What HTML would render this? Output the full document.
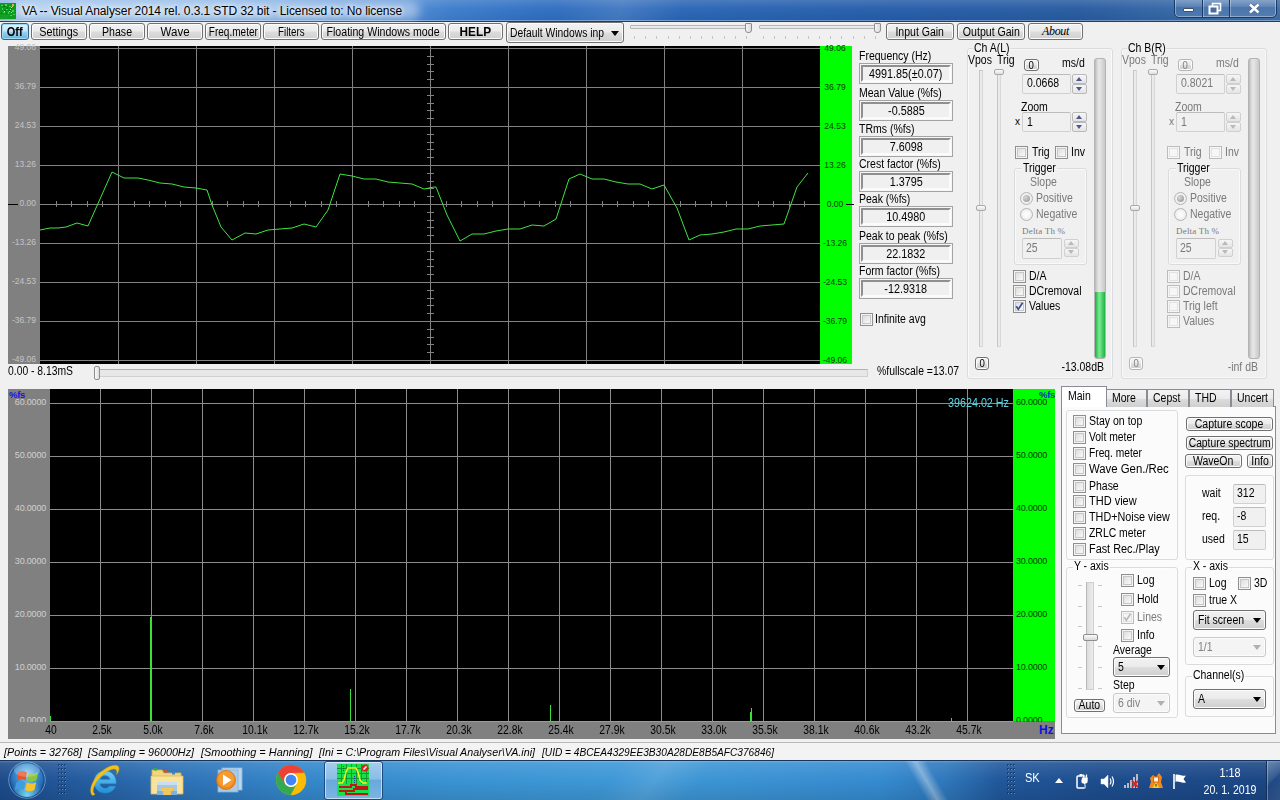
<!DOCTYPE html><html><head><meta charset="utf-8"><title>VA</title><style>
*{box-sizing:border-box;margin:0;padding:0}
html,body{width:1280px;height:800px;overflow:hidden;background:#f0f0f0;}
body{position:relative;font-family:"Liberation Sans",sans-serif;font-size:11px;color:#000;}
.a{position:absolute;}
.t{position:absolute;white-space:nowrap;line-height:13px;height:13px;font-size:12px;transform-origin:0 50%;transform:scaleX(.875);}
.n{transform:none !important;}
.s{display:inline-block;white-space:nowrap;transform:scaleX(.875);transform-origin:50% 50%;}
.sl{display:inline-block;white-space:nowrap;transform:scaleX(.875);transform-origin:0 50%;}
.g{color:#7a7a7a;}
.btn{position:absolute;border:1px solid #707070;border-radius:3px;background:linear-gradient(#f2f2f2 0%,#ebebeb 48%,#dddddd 52%,#cfcfcf 100%);box-shadow:inset 0 0 0 1px #fcfcfc;text-align:center;white-space:nowrap;font-size:12px;overflow:hidden;display:flex;justify-content:center;}
.cb{position:absolute;width:13px;height:13px;border:1px solid #8e8f8f;background:linear-gradient(135deg,#d6d6d6 0%,#f4f4f4 70%,#fbfbfb 100%);box-shadow:inset 0 0 0 1px #f4f4f4, inset 0 0 0 2px #c4c6c8;}
.cb.d{border-color:#bcbcbc;background:#f6f6f6;box-shadow:inset 0 0 0 1px #f6f6f6, inset 0 0 0 2px #e2e2e2;}
.gb{position:absolute;border:1px solid #d9dcde;border-radius:3px;box-shadow:inset 0 0 0 1px rgba(255,255,255,.6);}
.ed{position:absolute;border:1px solid #d0d0d0;border-top-color:#bcbcbc;background:#f0f0f0;border-radius:2px;}
.sunk{position:absolute;border:1px solid #a3a3a3;background:#f0f0f0;text-align:center;font-size:12px;box-shadow:inset 0 0 0 1px #f6f6f6;}
.sunk:before{content:"";position:absolute;left:1px;top:1px;right:1px;bottom:1px;border:2px solid;border-color:#8f8f8f #fbfbfb #fbfbfb #8f8f8f;}
.combo{position:absolute;border:1px solid #707070;border-radius:3px;background:linear-gradient(#f2f2f2 0%,#ebebeb 48%,#dddddd 52%,#cfcfcf 100%);box-shadow:inset 0 0 0 1px #fcfcfc;font-size:12px;white-space:nowrap;}
.combo.d{border-color:#c9c9c9;background:#f4f4f4;color:#838383;}
.combo i{position:absolute;right:4px;top:50%;margin-top:-2px;border:4px solid transparent;border-top:5px solid #000;border-bottom:0;}
.combo.d i{border-top-color:#b0b0b0;}
</style></head><body>
<div class="a" style="left:0;top:0;width:1280px;height:22px;background:linear-gradient(90deg,#8db8e8 0px,#7eaee4 200px,#5a93d8 380px,#3b7bcb 450px,#2d6dc0 540px,#2763b3 700px,#235ba8 900px,#25599f 1080px,#3668a6 1200px,#3d6ca6 1280px);"></div>
<div class="a" style="left:0;top:0;width:1280px;height:22px;background:linear-gradient(180deg,rgba(255,255,255,.16) 0,rgba(255,255,255,.04) 40%,rgba(0,0,0,.04) 100%);"></div>
<div class="a" style="left:560px;top:0;width:120px;height:21px;background:linear-gradient(105deg,rgba(255,255,255,0) 0,rgba(255,255,255,.10) 50%,rgba(255,255,255,0) 100%);"></div>
<div class="a" style="left:0px;top:20px;width:1280px;height:1px;background:rgba(255,255,255,.35);"></div>
<div class="a" style="left:0px;top:21px;width:1280px;height:1px;background:#1c3f6b;"></div>
<div class="a" style="left:10px;top:1px;width:410px;height:19px;border-radius:10px;background:rgba(255,255,255,.42);filter:blur(5px);"></div>
<svg class="a" style="left:0px;top:3px" width="16" height="16" viewBox="0 0 16 16" shape-rendering="crispEdges"><rect width="16" height="16" fill="#0f9a22"/>
<g fill="#3fd44a"><rect x="1" y="2" width="2" height="1"/><rect x="5" y="1" width="2" height="2"/><rect x="9" y="3" width="2" height="1"/><rect x="2" y="5" width="1" height="2"/><rect x="6" y="6" width="2" height="1"/><rect x="12" y="7" width="2" height="2"/><rect x="3" y="9" width="2" height="1"/><rect x="8" y="9" width="1" height="2"/><rect x="13" y="11" width="2" height="1"/><rect x="10" y="12" width="2" height="1"/></g>
<g fill="#087014"><rect x="3" y="3" width="2" height="1"/><rect x="7" y="4" width="1" height="2"/><rect x="11" y="5" width="1" height="1"/><rect x="4" y="7" width="2" height="1"/><rect x="9" y="7" width="2" height="1"/><rect x="1" y="10" width="1" height="1"/><rect x="6" y="10" width="1" height="1"/></g>
<g fill="#c8e850"><rect x="12" y="3" width="1" height="1"/><rect x="11" y="4" width="1" height="1"/><rect x="10" y="6" width="1" height="1"/><rect x="9" y="8" width="1" height="1"/><rect x="4" y="8" width="1" height="1"/><rect x="11" y="9" width="1" height="1"/></g>
<rect x="12" y="1" width="2" height="2" fill="#f0a050"/>
<g fill="#6a7a10"><rect x="0" y="12" width="9" height="1"/><rect x="0" y="14" width="11" height="1"/><rect x="1" y="13" width="1" height="1"/><rect x="3" y="13" width="1" height="1"/><rect x="5" y="13" width="1" height="1"/><rect x="7" y="13" width="1" height="1"/><rect x="1" y="15" width="1" height="1"/><rect x="3" y="15" width="1" height="1"/><rect x="5" y="15" width="1" height="1"/></g>
</svg>
<div class="t n" style="left:22px;top:4px;line-height:15px;height:15px;color:#000;text-shadow:0 0 4px #fff,0 0 6px #fff;font-size:12px;letter-spacing:-0.078px;">VA -- Visual Analyser 2014 rel. 0.3.1 STD 32 bit - Licensed to: No license</div>
<div class="a" style="left:1174px;top:-3px;width:103px;height:21px;border:1px solid #1b3b63;border-radius:0 0 5px 5px;background:linear-gradient(rgba(255,255,255,.30),rgba(255,255,255,.12) 45%,rgba(255,255,255,.04) 50%,rgba(255,255,255,.12));box-shadow:inset 0 0 0 1px rgba(255,255,255,.35);"></div>
<div class="a" style="left:1202px;top:0px;width:1px;height:17px;background:#1b3b63;"></div>
<div class="a" style="left:1203px;top:0px;width:1px;height:17px;background:rgba(255,255,255,.3);"></div>
<div class="a" style="left:1229px;top:0px;width:1px;height:17px;background:#1b3b63;"></div>
<div class="a" style="left:1230px;top:0px;width:1px;height:17px;background:rgba(255,255,255,.3);"></div>
<div class="a" style="left:1183px;top:8px;width:11px;height:4px;background:#fff;border:1px solid #42506a;border-radius:1px;"></div>
<svg class="a" style="left:1208px;top:2px" width="14" height="13" viewBox="0 0 14 13"><rect x="4.5" y="1.5" width="8" height="7" fill="none" stroke="#fff" stroke-width="1.6"/><rect x="1.5" y="4.5" width="8" height="7" fill="#4a6d9c" stroke="#fff" stroke-width="2"/></svg>
<svg class="a" style="left:1248px;top:3px" width="13" height="11" viewBox="0 0 13 11"><path d="M2 1.5 L10.5 9.5 M10.5 1.5 L2 9.5" stroke="#3a4f72" stroke-width="4" stroke-opacity=".6"/><path d="M2 1.5 L10.5 9.5 M10.5 1.5 L2 9.5" stroke="#fff" stroke-width="2.6"/></svg>
<div class="a" style="left:0px;top:22px;width:1280px;height:24px;background:#f0f0f0;"></div>
<div class="btn" style="left:1px;top:23px;width:28px;height:17px;line-height:15px;font-weight:bold;font-size:12px;border-color:#2c628b;background:linear-gradient(#e0f2fc 0%,#c4e5f6 48%,#98d1ef 52%,#68b3db 100%);box-shadow:inset 0 0 0 1px #9edaf5;padding-top:1px;"><span class="s" style="transform:scaleX(.92);">Off</span></div>
<div class="btn" style="left:31px;top:23px;width:56px;height:17px;line-height:17px;"><span class="s" style="font-size:12px;transform:scaleX(0.8995);">Settings</span></div>
<div class="btn" style="left:89px;top:23px;width:56px;height:17px;line-height:17px;"><span class="s" style="font-size:12px;transform:scaleX(0.8815);">Phase</span></div>
<div class="btn" style="left:147px;top:23px;width:56px;height:17px;line-height:17px;"><span class="s" style="font-size:12px;transform:scaleX(0.9592);">Wave</span></div>
<div class="btn" style="left:205px;top:23px;width:56px;height:17px;line-height:17px;"><span class="s" style="font-size:12px;transform:scaleX(0.8349);">Freq.meter</span></div>
<div class="btn" style="left:263px;top:23px;width:56px;height:17px;line-height:17px;"><span class="s" style="font-size:12px;transform:scaleX(0.8111);">Filters</span></div>
<div class="btn" style="left:321px;top:23px;width:125px;height:17px;line-height:17px;"><span class="s" style="font-size:12px;transform:scaleX(0.8824);">Floating Windows mode</span></div>
<div class="btn" style="left:886px;top:23px;width:68px;height:17px;line-height:17px;"><span class="s" style="font-size:12px;transform:scaleX(0.8758);">Input Gain</span></div>
<div class="btn" style="left:957px;top:23px;width:68px;height:17px;line-height:17px;"><span class="s" style="font-size:12px;transform:scaleX(0.8807);">Output Gain</span></div>
<div class="btn" style="left:448px;top:23px;width:55px;height:17px;line-height:16px;"><span class="s" style="font-size:13px;font-weight:bold;transform:scaleX(0.9085);">HELP</span></div>
<div class="btn" style="left:1028px;top:23px;width:55px;height:17px;line-height:15px;"><i style="font-family:'Liberation Serif',serif;font-size:12px;letter-spacing:-0.3px;">About</i></div>
<div class="combo" style="left:506px;top:22px;width:118px;height:21px;line-height:20px;padding-left:3px;"><span class="sl" style="font-size:12px;transform:scaleX(0.8593);">Default Windows inp</span><i></i></div>
<div class="a" style="left:630px;top:25px;width:120px;height:4px;border:1px solid #b6b6b6;background:#e7eaea;border-radius:1px;"></div>
<div class="a" style="left:745px;top:23px;width:7px;height:10px;border:1px solid #8e8e8e;background:linear-gradient(90deg,#f4f4f4,#dcdcdc);border-radius:1px 1px 3px 3px;"></div>
<div class="a" style="left:634px;top:36px;width:1px;height:3px;background:#c4c4c4;"></div>
<div class="a" style="left:645px;top:36px;width:1px;height:3px;background:#c4c4c4;"></div>
<div class="a" style="left:656px;top:36px;width:1px;height:3px;background:#c4c4c4;"></div>
<div class="a" style="left:668px;top:36px;width:1px;height:3px;background:#c4c4c4;"></div>
<div class="a" style="left:679px;top:36px;width:1px;height:3px;background:#c4c4c4;"></div>
<div class="a" style="left:690px;top:36px;width:1px;height:3px;background:#c4c4c4;"></div>
<div class="a" style="left:701px;top:36px;width:1px;height:3px;background:#c4c4c4;"></div>
<div class="a" style="left:712px;top:36px;width:1px;height:3px;background:#c4c4c4;"></div>
<div class="a" style="left:724px;top:36px;width:1px;height:3px;background:#c4c4c4;"></div>
<div class="a" style="left:735px;top:36px;width:1px;height:3px;background:#c4c4c4;"></div>
<div class="a" style="left:746px;top:36px;width:1px;height:3px;background:#c4c4c4;"></div>
<div class="a" style="left:759px;top:25px;width:120px;height:4px;border:1px solid #b6b6b6;background:#e7eaea;border-radius:1px;"></div>
<div class="a" style="left:874px;top:23px;width:7px;height:10px;border:1px solid #8e8e8e;background:linear-gradient(90deg,#f4f4f4,#dcdcdc);border-radius:1px 1px 3px 3px;"></div>
<div class="a" style="left:763px;top:36px;width:1px;height:3px;background:#c4c4c4;"></div>
<div class="a" style="left:774px;top:36px;width:1px;height:3px;background:#c4c4c4;"></div>
<div class="a" style="left:785px;top:36px;width:1px;height:3px;background:#c4c4c4;"></div>
<div class="a" style="left:797px;top:36px;width:1px;height:3px;background:#c4c4c4;"></div>
<div class="a" style="left:808px;top:36px;width:1px;height:3px;background:#c4c4c4;"></div>
<div class="a" style="left:819px;top:36px;width:1px;height:3px;background:#c4c4c4;"></div>
<div class="a" style="left:830px;top:36px;width:1px;height:3px;background:#c4c4c4;"></div>
<div class="a" style="left:841px;top:36px;width:1px;height:3px;background:#c4c4c4;"></div>
<div class="a" style="left:853px;top:36px;width:1px;height:3px;background:#c4c4c4;"></div>
<div class="a" style="left:864px;top:36px;width:1px;height:3px;background:#c4c4c4;"></div>
<div class="a" style="left:875px;top:36px;width:1px;height:3px;background:#c4c4c4;"></div>
<div class="a" style="left:8px;top:46px;width:32px;height:318px;background:#808080;"></div>
<div class="a" style="left:40px;top:46px;width:780px;height:318px;background:#000;"></div>
<div class="a" style="left:820px;top:46px;width:32px;height:318px;background:#00ff00;"></div>
<svg class="a" style="left:0;top:0" width="1280" height="800" viewBox="0 0 1280 800" shape-rendering="crispEdges"><rect x="40" y="48" width="780" height="1" fill="#828282"/><rect x="40" y="87" width="780" height="1" fill="#828282"/><rect x="40" y="126" width="780" height="1" fill="#828282"/><rect x="40" y="165" width="780" height="1" fill="#828282"/><rect x="40" y="204" width="780" height="1" fill="#828282"/><rect x="40" y="243" width="780" height="1" fill="#828282"/><rect x="40" y="282" width="780" height="1" fill="#828282"/><rect x="40" y="321" width="780" height="1" fill="#828282"/><rect x="40" y="360" width="780" height="1" fill="#828282"/><rect x="118" y="46" width="1" height="318" fill="#828282"/><rect x="196" y="46" width="1" height="318" fill="#828282"/><rect x="274" y="46" width="1" height="318" fill="#828282"/><rect x="352" y="46" width="1" height="318" fill="#828282"/><rect x="430" y="46" width="1" height="318" fill="#828282"/><rect x="508" y="46" width="1" height="318" fill="#828282"/><rect x="586" y="46" width="1" height="318" fill="#828282"/><rect x="664" y="46" width="1" height="318" fill="#828282"/><rect x="742" y="46" width="1" height="318" fill="#828282"/><rect x="56" y="201" width="1" height="6" fill="#828282"/><rect x="71" y="201" width="1" height="6" fill="#828282"/><rect x="87" y="201" width="1" height="6" fill="#828282"/><rect x="102" y="201" width="1" height="6" fill="#828282"/><rect x="118" y="201" width="1" height="6" fill="#828282"/><rect x="134" y="201" width="1" height="6" fill="#828282"/><rect x="149" y="201" width="1" height="6" fill="#828282"/><rect x="165" y="201" width="1" height="6" fill="#828282"/><rect x="180" y="201" width="1" height="6" fill="#828282"/><rect x="196" y="201" width="1" height="6" fill="#828282"/><rect x="212" y="201" width="1" height="6" fill="#828282"/><rect x="227" y="201" width="1" height="6" fill="#828282"/><rect x="243" y="201" width="1" height="6" fill="#828282"/><rect x="258" y="201" width="1" height="6" fill="#828282"/><rect x="274" y="201" width="1" height="6" fill="#828282"/><rect x="290" y="201" width="1" height="6" fill="#828282"/><rect x="305" y="201" width="1" height="6" fill="#828282"/><rect x="321" y="201" width="1" height="6" fill="#828282"/><rect x="336" y="201" width="1" height="6" fill="#828282"/><rect x="352" y="201" width="1" height="6" fill="#828282"/><rect x="368" y="201" width="1" height="6" fill="#828282"/><rect x="383" y="201" width="1" height="6" fill="#828282"/><rect x="399" y="201" width="1" height="6" fill="#828282"/><rect x="414" y="201" width="1" height="6" fill="#828282"/><rect x="430" y="201" width="1" height="6" fill="#828282"/><rect x="446" y="201" width="1" height="6" fill="#828282"/><rect x="461" y="201" width="1" height="6" fill="#828282"/><rect x="477" y="201" width="1" height="6" fill="#828282"/><rect x="492" y="201" width="1" height="6" fill="#828282"/><rect x="508" y="201" width="1" height="6" fill="#828282"/><rect x="524" y="201" width="1" height="6" fill="#828282"/><rect x="539" y="201" width="1" height="6" fill="#828282"/><rect x="555" y="201" width="1" height="6" fill="#828282"/><rect x="570" y="201" width="1" height="6" fill="#828282"/><rect x="586" y="201" width="1" height="6" fill="#828282"/><rect x="602" y="201" width="1" height="6" fill="#828282"/><rect x="617" y="201" width="1" height="6" fill="#828282"/><rect x="633" y="201" width="1" height="6" fill="#828282"/><rect x="648" y="201" width="1" height="6" fill="#828282"/><rect x="664" y="201" width="1" height="6" fill="#828282"/><rect x="680" y="201" width="1" height="6" fill="#828282"/><rect x="695" y="201" width="1" height="6" fill="#828282"/><rect x="711" y="201" width="1" height="6" fill="#828282"/><rect x="726" y="201" width="1" height="6" fill="#828282"/><rect x="742" y="201" width="1" height="6" fill="#828282"/><rect x="758" y="201" width="1" height="6" fill="#828282"/><rect x="773" y="201" width="1" height="6" fill="#828282"/><rect x="789" y="201" width="1" height="6" fill="#828282"/><rect x="804" y="201" width="1" height="6" fill="#828282"/><rect x="427" y="48" width="7" height="1" fill="#828282"/><rect x="427" y="56" width="7" height="1" fill="#828282"/><rect x="427" y="64" width="7" height="1" fill="#828282"/><rect x="427" y="71" width="7" height="1" fill="#828282"/><rect x="427" y="79" width="7" height="1" fill="#828282"/><rect x="427" y="87" width="7" height="1" fill="#828282"/><rect x="427" y="95" width="7" height="1" fill="#828282"/><rect x="427" y="103" width="7" height="1" fill="#828282"/><rect x="427" y="110" width="7" height="1" fill="#828282"/><rect x="427" y="118" width="7" height="1" fill="#828282"/><rect x="427" y="126" width="7" height="1" fill="#828282"/><rect x="427" y="134" width="7" height="1" fill="#828282"/><rect x="427" y="142" width="7" height="1" fill="#828282"/><rect x="427" y="149" width="7" height="1" fill="#828282"/><rect x="427" y="157" width="7" height="1" fill="#828282"/><rect x="427" y="165" width="7" height="1" fill="#828282"/><rect x="427" y="173" width="7" height="1" fill="#828282"/><rect x="427" y="181" width="7" height="1" fill="#828282"/><rect x="427" y="188" width="7" height="1" fill="#828282"/><rect x="427" y="196" width="7" height="1" fill="#828282"/><rect x="427" y="204" width="7" height="1" fill="#828282"/><rect x="427" y="212" width="7" height="1" fill="#828282"/><rect x="427" y="220" width="7" height="1" fill="#828282"/><rect x="427" y="227" width="7" height="1" fill="#828282"/><rect x="427" y="235" width="7" height="1" fill="#828282"/><rect x="427" y="243" width="7" height="1" fill="#828282"/><rect x="427" y="251" width="7" height="1" fill="#828282"/><rect x="427" y="259" width="7" height="1" fill="#828282"/><rect x="427" y="266" width="7" height="1" fill="#828282"/><rect x="427" y="274" width="7" height="1" fill="#828282"/><rect x="427" y="282" width="7" height="1" fill="#828282"/><rect x="427" y="290" width="7" height="1" fill="#828282"/><rect x="427" y="298" width="7" height="1" fill="#828282"/><rect x="427" y="305" width="7" height="1" fill="#828282"/><rect x="427" y="313" width="7" height="1" fill="#828282"/><rect x="427" y="321" width="7" height="1" fill="#828282"/><rect x="427" y="329" width="7" height="1" fill="#828282"/><rect x="427" y="337" width="7" height="1" fill="#828282"/><rect x="427" y="344" width="7" height="1" fill="#828282"/><rect x="427" y="352" width="7" height="1" fill="#828282"/><rect x="427" y="360" width="7" height="1" fill="#828282"/></svg>
<div class="t n" style="left:6px;top:42px;width:30px;text-align:right;font-size:8.5px;line-height:11px;height:11px;color:#c4c4c4;">49.06</div>
<div class="t n" style="left:820px;top:43px;width:30px;text-align:center;font-size:8.5px;line-height:11px;height:11px;color:#0a3a0a;">49.06</div>
<div class="t n" style="left:6px;top:81px;width:30px;text-align:right;font-size:8.5px;line-height:11px;height:11px;color:#c4c4c4;">36.79</div>
<div class="t n" style="left:820px;top:82px;width:30px;text-align:center;font-size:8.5px;line-height:11px;height:11px;color:#0a3a0a;">36.79</div>
<div class="t n" style="left:6px;top:120px;width:30px;text-align:right;font-size:8.5px;line-height:11px;height:11px;color:#c4c4c4;">24.53</div>
<div class="t n" style="left:820px;top:121px;width:30px;text-align:center;font-size:8.5px;line-height:11px;height:11px;color:#0a3a0a;">24.53</div>
<div class="t n" style="left:6px;top:159px;width:30px;text-align:right;font-size:8.5px;line-height:11px;height:11px;color:#c4c4c4;">13.26</div>
<div class="t n" style="left:820px;top:160px;width:30px;text-align:center;font-size:8.5px;line-height:11px;height:11px;color:#0a3a0a;">13.26</div>
<div class="t n" style="left:6px;top:198px;width:30px;text-align:right;font-size:8.5px;line-height:11px;height:11px;color:#c4c4c4;">0.00</div>
<div class="t n" style="left:820px;top:199px;width:30px;text-align:center;font-size:8.5px;line-height:11px;height:11px;color:#0a3a0a;">0.00</div>
<div class="t n" style="left:6px;top:237px;width:30px;text-align:right;font-size:8.5px;line-height:11px;height:11px;color:#c4c4c4;">-13.26</div>
<div class="t n" style="left:820px;top:238px;width:30px;text-align:center;font-size:8.5px;line-height:11px;height:11px;color:#0a3a0a;">-13.26</div>
<div class="t n" style="left:6px;top:276px;width:30px;text-align:right;font-size:8.5px;line-height:11px;height:11px;color:#c4c4c4;">-24.53</div>
<div class="t n" style="left:820px;top:277px;width:30px;text-align:center;font-size:8.5px;line-height:11px;height:11px;color:#0a3a0a;">-24.53</div>
<div class="t n" style="left:6px;top:315px;width:30px;text-align:right;font-size:8.5px;line-height:11px;height:11px;color:#c4c4c4;">-36.79</div>
<div class="t n" style="left:820px;top:316px;width:30px;text-align:center;font-size:8.5px;line-height:11px;height:11px;color:#0a3a0a;">-36.79</div>
<div class="t n" style="left:6px;top:354px;width:30px;text-align:right;font-size:8.5px;line-height:11px;height:11px;color:#c4c4c4;">-49.06</div>
<div class="t n" style="left:820px;top:355px;width:30px;text-align:center;font-size:8.5px;line-height:11px;height:11px;color:#0a3a0a;">-49.06</div>
<div class="a" style="left:8px;top:204px;width:10px;height:1px;background:#000;"></div>
<div class="a" style="left:846px;top:204px;width:8px;height:1px;background:#000;"></div>
<svg class="a" style="left:0;top:0" width="1280" height="400"><polyline points="40,230 50,228 58,228 66,227 77,223 88,226 112,172 124,178 138,178 148,180 160,183 172,184 184,187 196,188 207,190 212,205 221,227 232,240 245,233 256,234 268,230 280,229 292,228 304,224 316,227 328,210 340,174 352,176 364,179 376,179 388,182 400,183 412,184 424,189 434,187 436,187 447,215 460,241 472,234 484,234 496,231 508,229 520,229 532,225 544,226 556,219 569,179 580,174 592,179 604,179 616,182 628,184 640,184 652,189 664,185 677,208 689,240 700,235 712,234 724,232 736,229 748,229 760,226 772,225 784,224 797,187 808,173" fill="none" stroke="#3fe43f" stroke-width="1"/></svg>
<div class="t " style="left:8px;top:365px;font-size:12px;transform:scaleX(0.8624);">0.00 - 8.13mS</div>
<div class="a" style="left:97px;top:369px;width:771px;height:8px;border:1px solid #d0d0d0;border-top-color:#b0b0b0;background:#e7e7e7;border-radius:1px;"></div>
<div class="a" style="left:94px;top:366px;width:6px;height:14px;border:1px solid #8e8e8e;background:linear-gradient(90deg,#fafafa,#dcdcdc);border-radius:2px;"></div>
<div class="t " style="left:877px;top:365px;font-size:12px;transform:scaleX(0.8686);">%fullscale =13.07</div>
<div class="a" style="left:8px;top:389px;width:1047px;height:350px;background:#808080;"></div>
<div class="a" style="left:50px;top:389px;width:963px;height:333px;background:#000;"></div>
<div class="a" style="left:1013px;top:389px;width:42px;height:332px;background:#00ff00;"></div>
<svg class="a" style="left:0;top:0" width="1280" height="800" viewBox="0 0 1280 800" shape-rendering="crispEdges"><rect x="50" y="403" width="963" height="1" fill="#8c8c8c"/><rect x="50" y="456" width="963" height="1" fill="#8c8c8c"/><rect x="50" y="509" width="963" height="1" fill="#8c8c8c"/><rect x="50" y="562" width="963" height="1" fill="#8c8c8c"/><rect x="50" y="615" width="963" height="1" fill="#8c8c8c"/><rect x="50" y="668" width="963" height="1" fill="#8c8c8c"/><rect x="100" y="389" width="1" height="332" fill="#8c8c8c"/><rect x="151" y="389" width="1" height="332" fill="#8c8c8c"/><rect x="202" y="389" width="1" height="332" fill="#8c8c8c"/><rect x="253" y="389" width="1" height="332" fill="#8c8c8c"/><rect x="304" y="389" width="1" height="332" fill="#8c8c8c"/><rect x="355" y="389" width="1" height="332" fill="#8c8c8c"/><rect x="406" y="389" width="1" height="332" fill="#8c8c8c"/><rect x="457" y="389" width="1" height="332" fill="#8c8c8c"/><rect x="508" y="389" width="1" height="332" fill="#8c8c8c"/><rect x="559" y="389" width="1" height="332" fill="#8c8c8c"/><rect x="610" y="389" width="1" height="332" fill="#8c8c8c"/><rect x="661" y="389" width="1" height="332" fill="#8c8c8c"/><rect x="712" y="389" width="1" height="332" fill="#8c8c8c"/><rect x="763" y="389" width="1" height="332" fill="#8c8c8c"/><rect x="814" y="389" width="1" height="332" fill="#8c8c8c"/><rect x="865" y="389" width="1" height="332" fill="#8c8c8c"/><rect x="916" y="389" width="1" height="332" fill="#8c8c8c"/><rect x="967" y="389" width="1" height="332" fill="#8c8c8c"/><rect x="50" y="721" width="963" height="1" fill="#35e235"/><rect x="150" y="617" width="2" height="104" fill="#35e235"/><rect x="350" y="689" width="1" height="32" fill="#35e235"/><rect x="550" y="705" width="1" height="16" fill="#35e235"/><rect x="751" y="708" width="1" height="13" fill="#35e235"/><rect x="750" y="712" width="1" height="9" fill="#35e235"/><rect x="951" y="718" width="1" height="3" fill="#35e235"/><rect x="50" y="716" width="1" height="5" fill="#35e235"/></svg>
<div class="t n" style="left:8px;top:396px;width:38px;text-align:right;font-size:9px;letter-spacing:-0.2px;line-height:12px;height:12px;color:#d0d0d0;">60.0000</div>
<div class="t n" style="left:1016px;top:396px;font-size:9px;letter-spacing:-0.2px;line-height:12px;height:12px;color:#0a3a0a;">60.0000</div>
<div class="t n" style="left:8px;top:449px;width:38px;text-align:right;font-size:9px;letter-spacing:-0.2px;line-height:12px;height:12px;color:#d0d0d0;">50.0000</div>
<div class="t n" style="left:1016px;top:449px;font-size:9px;letter-spacing:-0.2px;line-height:12px;height:12px;color:#0a3a0a;">50.0000</div>
<div class="t n" style="left:8px;top:502px;width:38px;text-align:right;font-size:9px;letter-spacing:-0.2px;line-height:12px;height:12px;color:#d0d0d0;">40.0000</div>
<div class="t n" style="left:1016px;top:502px;font-size:9px;letter-spacing:-0.2px;line-height:12px;height:12px;color:#0a3a0a;">40.0000</div>
<div class="t n" style="left:8px;top:555px;width:38px;text-align:right;font-size:9px;letter-spacing:-0.2px;line-height:12px;height:12px;color:#d0d0d0;">30.0000</div>
<div class="t n" style="left:1016px;top:555px;font-size:9px;letter-spacing:-0.2px;line-height:12px;height:12px;color:#0a3a0a;">30.0000</div>
<div class="t n" style="left:8px;top:608px;width:38px;text-align:right;font-size:9px;letter-spacing:-0.2px;line-height:12px;height:12px;color:#d0d0d0;">20.0000</div>
<div class="t n" style="left:1016px;top:608px;font-size:9px;letter-spacing:-0.2px;line-height:12px;height:12px;color:#0a3a0a;">20.0000</div>
<div class="t n" style="left:8px;top:661px;width:38px;text-align:right;font-size:9px;letter-spacing:-0.2px;line-height:12px;height:12px;color:#d0d0d0;">10.0000</div>
<div class="t n" style="left:1016px;top:661px;font-size:9px;letter-spacing:-0.2px;line-height:12px;height:12px;color:#0a3a0a;">10.0000</div>
<div class="t n" style="left:8px;top:714px;width:38px;text-align:right;font-size:9px;letter-spacing:-0.2px;line-height:12px;height:12px;color:#d0d0d0;">0.0000</div>
<div class="t n" style="left:1016px;top:714px;font-size:9px;letter-spacing:-0.2px;line-height:12px;height:12px;color:#0a3a0a;">0.0000</div>
<div class="a" style="left:8px;top:722px;width:1047px;height:17px;background:#808080;"></div>
<div class="t n" style="left:9px;top:390px;font-size:9.5px;line-height:10px;height:10px;color:#1414e6;font-weight:bold;letter-spacing:-0.3px;">%fs</div>
<div class="t n" style="left:1039px;top:390px;font-size:9.5px;line-height:10px;height:10px;color:#1030c8;font-weight:bold;letter-spacing:-0.3px;">%fs</div>
<div class="t" style="left:26px;top:723px;width:50px;text-align:center;font-size:12px;line-height:14px;height:14px;color:#000;transform-origin:50% 50%;transform:scaleX(.86);">40</div>
<div class="t" style="left:77px;top:723px;width:50px;text-align:center;font-size:12px;line-height:14px;height:14px;color:#000;transform-origin:50% 50%;transform:scaleX(.86);">2.5k</div>
<div class="t" style="left:128px;top:723px;width:50px;text-align:center;font-size:12px;line-height:14px;height:14px;color:#000;transform-origin:50% 50%;transform:scaleX(.86);">5.0k</div>
<div class="t" style="left:179px;top:723px;width:50px;text-align:center;font-size:12px;line-height:14px;height:14px;color:#000;transform-origin:50% 50%;transform:scaleX(.86);">7.6k</div>
<div class="t" style="left:230px;top:723px;width:50px;text-align:center;font-size:12px;line-height:14px;height:14px;color:#000;transform-origin:50% 50%;transform:scaleX(.86);">10.1k</div>
<div class="t" style="left:281px;top:723px;width:50px;text-align:center;font-size:12px;line-height:14px;height:14px;color:#000;transform-origin:50% 50%;transform:scaleX(.86);">12.7k</div>
<div class="t" style="left:332px;top:723px;width:50px;text-align:center;font-size:12px;line-height:14px;height:14px;color:#000;transform-origin:50% 50%;transform:scaleX(.86);">15.2k</div>
<div class="t" style="left:383px;top:723px;width:50px;text-align:center;font-size:12px;line-height:14px;height:14px;color:#000;transform-origin:50% 50%;transform:scaleX(.86);">17.7k</div>
<div class="t" style="left:434px;top:723px;width:50px;text-align:center;font-size:12px;line-height:14px;height:14px;color:#000;transform-origin:50% 50%;transform:scaleX(.86);">20.3k</div>
<div class="t" style="left:485px;top:723px;width:50px;text-align:center;font-size:12px;line-height:14px;height:14px;color:#000;transform-origin:50% 50%;transform:scaleX(.86);">22.8k</div>
<div class="t" style="left:536px;top:723px;width:50px;text-align:center;font-size:12px;line-height:14px;height:14px;color:#000;transform-origin:50% 50%;transform:scaleX(.86);">25.4k</div>
<div class="t" style="left:587px;top:723px;width:50px;text-align:center;font-size:12px;line-height:14px;height:14px;color:#000;transform-origin:50% 50%;transform:scaleX(.86);">27.9k</div>
<div class="t" style="left:638px;top:723px;width:50px;text-align:center;font-size:12px;line-height:14px;height:14px;color:#000;transform-origin:50% 50%;transform:scaleX(.86);">30.5k</div>
<div class="t" style="left:689px;top:723px;width:50px;text-align:center;font-size:12px;line-height:14px;height:14px;color:#000;transform-origin:50% 50%;transform:scaleX(.86);">33.0k</div>
<div class="t" style="left:740px;top:723px;width:50px;text-align:center;font-size:12px;line-height:14px;height:14px;color:#000;transform-origin:50% 50%;transform:scaleX(.86);">35.5k</div>
<div class="t" style="left:791px;top:723px;width:50px;text-align:center;font-size:12px;line-height:14px;height:14px;color:#000;transform-origin:50% 50%;transform:scaleX(.86);">38.1k</div>
<div class="t" style="left:842px;top:723px;width:50px;text-align:center;font-size:12px;line-height:14px;height:14px;color:#000;transform-origin:50% 50%;transform:scaleX(.86);">40.6k</div>
<div class="t" style="left:893px;top:723px;width:50px;text-align:center;font-size:12px;line-height:14px;height:14px;color:#000;transform-origin:50% 50%;transform:scaleX(.86);">43.2k</div>
<div class="t" style="left:944px;top:723px;width:50px;text-align:center;font-size:12px;line-height:14px;height:14px;color:#000;transform-origin:50% 50%;transform:scaleX(.86);">45.7k</div>
<div class="t n" style="left:1039px;top:723px;font-size:12px;line-height:14px;height:14px;color:#1010e0;font-weight:bold;">Hz</div>
<div class="t " style="left:948px;top:397px;font-size:12px;color:#5fd3e0;transform:scaleX(0.8962);">39624.02 Hz</div>
<div class="t " style="left:859px;top:50px;">Frequency (Hz)</div>
<div class="sunk" style="left:859px;top:63px;width:94px;height:21px;line-height:21px;font-size:12px;"><span class="s" style="transform:scaleX(.9);">4991.85(&plusmn;0.07)</span></div>
<div class="t " style="left:859px;top:87px;">Mean Value (%fs)</div>
<div class="sunk" style="left:859px;top:100px;width:94px;height:21px;line-height:21px;font-size:12px;"><span class="s" style="transform:scaleX(.9);">-0.5885</span></div>
<div class="t " style="left:859px;top:123px;">TRms (%fs)</div>
<div class="sunk" style="left:859px;top:136px;width:94px;height:21px;line-height:21px;font-size:12px;"><span class="s" style="transform:scaleX(.9);">7.6098</span></div>
<div class="t " style="left:859px;top:158px;">Crest factor (%fs)</div>
<div class="sunk" style="left:859px;top:171px;width:94px;height:21px;line-height:21px;font-size:12px;"><span class="s" style="transform:scaleX(.9);">1.3795</span></div>
<div class="t " style="left:859px;top:193px;">Peak (%fs)</div>
<div class="sunk" style="left:859px;top:206px;width:94px;height:21px;line-height:21px;font-size:12px;"><span class="s" style="transform:scaleX(.9);">10.4980</span></div>
<div class="t " style="left:859px;top:230px;">Peak to peak (%fs)</div>
<div class="sunk" style="left:859px;top:243px;width:94px;height:21px;line-height:21px;font-size:12px;"><span class="s" style="transform:scaleX(.9);">22.1832</span></div>
<div class="t " style="left:859px;top:265px;">Form factor (%fs)</div>
<div class="sunk" style="left:859px;top:278px;width:94px;height:21px;line-height:21px;font-size:12px;"><span class="s" style="transform:scaleX(.9);">-12.9318</span></div>
<div class="cb" style="left:860px;top:313px;"></div>
<div class="t " style="left:875px;top:313px;">Infinite avg</div>
<div class="gb" style="left:967px;top:48px;width:146px;height:331px;"></div>
<div class="t" style="left:973px;top:42px;background:#f0f0f0;padding:0 1px;">Ch A(L)</div>
<div class="t " style="left:968px;top:54px;">Vpos</div>
<div class="t " style="left:997px;top:54px;">Trig</div>
<div class="a" style="left:979px;top:70px;width:4px;height:277px;border:1px solid #d8d8d8;border-left-color:#c6c6c6;border-top-color:#c6c6c6;background:#eaeaea;"></div>
<div class="a" style="left:976px;top:205px;width:10px;height:6px;border:1px solid #a9a9a9;background:linear-gradient(#fbfbfb,#dedede);border-radius:2px;"></div>
<div class="a" style="left:997px;top:70px;width:4px;height:277px;border:1px solid #d8d8d8;border-left-color:#c6c6c6;border-top-color:#c6c6c6;background:#eaeaea;"></div>
<div class="a" style="left:994px;top:69px;width:10px;height:6px;border:1px solid #a9a9a9;background:linear-gradient(#fbfbfb,#dedede);border-radius:2px;"></div>
<div class="btn" style="left:1024px;top:59px;width:15px;height:12px;line-height:10px;font-size:11px;"><span class="s">0</span></div>
<div class="t " style="left:1062px;top:57px;">ms/d</div>
<div class="ed" style="left:1022px;top:74px;width:49px;height:20px;"></div>
<div class="t " style="left:1027px;top:77px;">0.0668</div>
<div class="a" style="left:1072px;top:74px;width:15px;height:10px;border:1px solid #b9b9b9;border-radius:2px;background:linear-gradient(#f6f6f6,#e4e4e4);"></div>
<div class="a" style="left:1076px;top:77px;border:3px solid transparent;border-bottom:4px solid #4b5a8a;border-top:0;"></div>
<div class="a" style="left:1072px;top:84px;width:15px;height:10px;border:1px solid #b9b9b9;border-radius:2px;background:linear-gradient(#f6f6f6,#e4e4e4);"></div>
<div class="a" style="left:1076px;top:87px;border:3px solid transparent;border-top:4px solid #4b5a8a;border-bottom:0;"></div>
<div class="t " style="left:1021px;top:101px;">Zoom</div>
<div class="t " style="left:1015px;top:115px;font-size:10px;transform:none;">x</div>
<div class="ed" style="left:1022px;top:112px;width:49px;height:20px;"></div>
<div class="t " style="left:1027px;top:116px;">1</div>
<div class="a" style="left:1072px;top:112px;width:15px;height:10px;border:1px solid #b9b9b9;border-radius:2px;background:linear-gradient(#f6f6f6,#e4e4e4);"></div>
<div class="a" style="left:1076px;top:115px;border:3px solid transparent;border-bottom:4px solid #4b5a8a;border-top:0;"></div>
<div class="a" style="left:1072px;top:122px;width:15px;height:10px;border:1px solid #b9b9b9;border-radius:2px;background:linear-gradient(#f6f6f6,#e4e4e4);"></div>
<div class="a" style="left:1076px;top:125px;border:3px solid transparent;border-top:4px solid #4b5a8a;border-bottom:0;"></div>
<div class="cb" style="left:1015px;top:146px;"></div>
<div class="t " style="left:1032px;top:146px;">Trig</div>
<div class="cb" style="left:1055px;top:146px;"></div>
<div class="t " style="left:1071px;top:146px;">Inv</div>
<div class="gb" style="left:1014px;top:168px;width:73px;height:97px;"></div>
<div class="t" style="left:1022px;top:162px;background:#f0f0f0;padding:0 1px;">Trigger</div>
<div class="t g" style="left:1030px;top:176px;">Slope</div>
<div class="a" style="left:1020px;top:192px;width:13px;height:13px;border:1px solid #b4b4b4;border-radius:7px;background:radial-gradient(#fafafa 30%,#e2e2e2 100%);"></div>
<div class="a" style="left:1023px;top:195px;width:7px;height:7px;border-radius:4px;background:radial-gradient(circle at 35% 35%,#d8d8d8,#8e8e8e);"></div>
<div class="t g" style="left:1036px;top:192px;">Positive</div>
<div class="a" style="left:1020px;top:208px;width:13px;height:13px;border:1px solid #b4b4b4;border-radius:7px;background:radial-gradient(#fafafa 30%,#e2e2e2 100%);"></div>
<div class="t g" style="left:1036px;top:208px;">Negative</div>
<div class="t g" style="left:1022px;top:225px;font-family:'Liberation Serif',serif;font-size:9px;letter-spacing:0.2px;transform:none;">Delta Th %</div>
<div class="ed" style="left:1022px;top:238px;width:40px;height:21px;"></div>
<div class="t g" style="left:1026px;top:242px;">25</div>
<div class="a" style="left:1064px;top:239px;width:15px;height:9px;border:1px solid #d0d0d0;border-radius:2px;background:linear-gradient(#f6f6f6,#e4e4e4);"></div>
<div class="a" style="left:1068px;top:241px;border:3px solid transparent;border-bottom:4px solid #b9b9b9;border-top:0;"></div>
<div class="a" style="left:1064px;top:248px;width:15px;height:9px;border:1px solid #d0d0d0;border-radius:2px;background:linear-gradient(#f6f6f6,#e4e4e4);"></div>
<div class="a" style="left:1068px;top:250px;border:3px solid transparent;border-top:4px solid #b9b9b9;border-bottom:0;"></div>
<div class="cb" style="left:1013px;top:270px;"></div>
<div class="t " style="left:1029px;top:270px;">D/A</div>
<div class="cb" style="left:1013px;top:285px;"></div>
<div class="t " style="left:1029px;top:285px;">DCremoval</div>
<div class="cb" style="left:1013px;top:300px;"><svg width="11" height="11" viewBox="0 0 11 11" style="position:absolute;left:0;top:0"><path d="M2.2 5.2 L4.3 8.2 L8.6 1.8" fill="none" stroke="#3a4d9c" stroke-width="1.7"/></svg></div>
<div class="t " style="left:1029px;top:300px;">Values</div>
<div class="btn" style="left:975px;top:357px;width:14px;height:13px;line-height:11px;font-size:11px;"><span class="s">0</span></div>
<div class="t " style="left:1028px;top:361px;width:76px;text-align:right;transform-origin:100% 50%;">-13.08dB</div>
<div class="a" style="left:1094px;top:58px;width:12px;height:301px;border:1px solid #b4b4b4;border-radius:3px;background:linear-gradient(90deg,#b8b8b8 0,#dcdcdc 25%,#e6e6e6 45%,#c8c8c8 100%);"></div>
<div class="a" style="left:1095px;top:292px;width:10px;height:66px;border-radius:0 0 2px 2px;background:linear-gradient(90deg,#19a83c 0,#5fdc7a 30%,#7ae890 45%,#1fb446 100%);"></div>
<div class="gb" style="left:1121px;top:48px;width:146px;height:331px;"></div>
<div class="t" style="left:1127px;top:42px;background:#f0f0f0;padding:0 1px;">Ch B(R)</div>
<div class="t g" style="left:1122px;top:54px;">Vpos</div>
<div class="t g" style="left:1151px;top:54px;">Trig</div>
<div class="a" style="left:1133px;top:70px;width:4px;height:277px;border:1px solid #d8d8d8;border-left-color:#c6c6c6;border-top-color:#c6c6c6;background:#eaeaea;"></div>
<div class="a" style="left:1130px;top:205px;width:10px;height:6px;border:1px solid #a9a9a9;background:linear-gradient(#fbfbfb,#dedede);border-radius:2px;"></div>
<div class="a" style="left:1151px;top:70px;width:4px;height:277px;border:1px solid #d8d8d8;border-left-color:#c6c6c6;border-top-color:#c6c6c6;background:#eaeaea;"></div>
<div class="a" style="left:1148px;top:69px;width:10px;height:6px;border:1px solid #a9a9a9;background:linear-gradient(#fbfbfb,#dedede);border-radius:2px;"></div>
<div class="btn" style="left:1178px;top:59px;width:15px;height:12px;line-height:10px;border-color:#b5b5b5;color:#838383;font-size:11px;"><span class="s">0</span></div>
<div class="t g" style="left:1216px;top:57px;">ms/d</div>
<div class="ed" style="left:1176px;top:74px;width:49px;height:20px;"></div>
<div class="t g" style="left:1181px;top:77px;">0.8021</div>
<div class="a" style="left:1226px;top:74px;width:15px;height:10px;border:1px solid #d0d0d0;border-radius:2px;background:linear-gradient(#f6f6f6,#e4e4e4);"></div>
<div class="a" style="left:1230px;top:77px;border:3px solid transparent;border-bottom:4px solid #b9b9b9;border-top:0;"></div>
<div class="a" style="left:1226px;top:84px;width:15px;height:10px;border:1px solid #d0d0d0;border-radius:2px;background:linear-gradient(#f6f6f6,#e4e4e4);"></div>
<div class="a" style="left:1230px;top:87px;border:3px solid transparent;border-top:4px solid #b9b9b9;border-bottom:0;"></div>
<div class="t g" style="left:1175px;top:101px;">Zoom</div>
<div class="t g" style="left:1169px;top:115px;font-size:10px;transform:none;">x</div>
<div class="ed" style="left:1176px;top:112px;width:49px;height:20px;"></div>
<div class="t g" style="left:1181px;top:116px;">1</div>
<div class="a" style="left:1226px;top:112px;width:15px;height:10px;border:1px solid #d0d0d0;border-radius:2px;background:linear-gradient(#f6f6f6,#e4e4e4);"></div>
<div class="a" style="left:1230px;top:115px;border:3px solid transparent;border-bottom:4px solid #b9b9b9;border-top:0;"></div>
<div class="a" style="left:1226px;top:122px;width:15px;height:10px;border:1px solid #d0d0d0;border-radius:2px;background:linear-gradient(#f6f6f6,#e4e4e4);"></div>
<div class="a" style="left:1230px;top:125px;border:3px solid transparent;border-top:4px solid #b9b9b9;border-bottom:0;"></div>
<div class="cb d" style="left:1167px;top:146px;"></div>
<div class="t g" style="left:1184px;top:146px;">Trig</div>
<div class="cb d" style="left:1209px;top:146px;"></div>
<div class="t g" style="left:1225px;top:146px;">Inv</div>
<div class="gb" style="left:1168px;top:168px;width:73px;height:97px;"></div>
<div class="t" style="left:1176px;top:162px;background:#f0f0f0;padding:0 1px;">Trigger</div>
<div class="t g" style="left:1184px;top:176px;">Slope</div>
<div class="a" style="left:1174px;top:192px;width:13px;height:13px;border:1px solid #b4b4b4;border-radius:7px;background:radial-gradient(#fafafa 30%,#e2e2e2 100%);"></div>
<div class="a" style="left:1177px;top:195px;width:7px;height:7px;border-radius:4px;background:radial-gradient(circle at 35% 35%,#d8d8d8,#8e8e8e);"></div>
<div class="t g" style="left:1190px;top:192px;">Positive</div>
<div class="a" style="left:1174px;top:208px;width:13px;height:13px;border:1px solid #b4b4b4;border-radius:7px;background:radial-gradient(#fafafa 30%,#e2e2e2 100%);"></div>
<div class="t g" style="left:1190px;top:208px;">Negative</div>
<div class="t g" style="left:1176px;top:225px;font-family:'Liberation Serif',serif;font-size:9px;letter-spacing:0.2px;transform:none;">Delta Th %</div>
<div class="ed" style="left:1176px;top:238px;width:40px;height:21px;"></div>
<div class="t g" style="left:1180px;top:242px;">25</div>
<div class="a" style="left:1218px;top:239px;width:15px;height:9px;border:1px solid #d0d0d0;border-radius:2px;background:linear-gradient(#f6f6f6,#e4e4e4);"></div>
<div class="a" style="left:1222px;top:241px;border:3px solid transparent;border-bottom:4px solid #b9b9b9;border-top:0;"></div>
<div class="a" style="left:1218px;top:248px;width:15px;height:9px;border:1px solid #d0d0d0;border-radius:2px;background:linear-gradient(#f6f6f6,#e4e4e4);"></div>
<div class="a" style="left:1222px;top:250px;border:3px solid transparent;border-top:4px solid #b9b9b9;border-bottom:0;"></div>
<div class="cb d" style="left:1167px;top:270px;"></div>
<div class="t g" style="left:1183px;top:270px;">D/A</div>
<div class="cb d" style="left:1167px;top:285px;"></div>
<div class="t g" style="left:1183px;top:285px;">DCremoval</div>
<div class="cb d" style="left:1167px;top:300px;"></div>
<div class="t g" style="left:1183px;top:300px;">Trig left</div>
<div class="cb d" style="left:1167px;top:315px;"></div>
<div class="t g" style="left:1183px;top:315px;">Values</div>
<div class="btn" style="left:1129px;top:357px;width:14px;height:13px;line-height:11px;border-color:#b5b5b5;color:#838383;font-size:11px;"><span class="s">0</span></div>
<div class="t g" style="left:1182px;top:361px;width:76px;text-align:right;transform-origin:100% 50%;">-inf dB</div>
<div class="a" style="left:1248px;top:58px;width:12px;height:301px;border:1px solid #b4b4b4;border-radius:3px;background:linear-gradient(90deg,#b8b8b8 0,#dcdcdc 25%,#e6e6e6 45%,#c8c8c8 100%);"></div>
<div class="a" style="left:1061px;top:406px;width:215px;height:328px;border:1px solid #898c95;background:#fff;"></div>
<div class="a" style="left:1106px;top:389px;width:41px;height:18px;border:1px solid #898c95;border-bottom:0;background:linear-gradient(#f3f3f3 0,#ebebeb 50%,#dddddd 51%,#cfcfcf 100%);text-align:left;padding-left:5px;line-height:17px;font-size:12px;"><span class="sl">More</span></div>
<div class="a" style="left:1147px;top:389px;width:42px;height:18px;border:1px solid #898c95;border-bottom:0;background:linear-gradient(#f3f3f3 0,#ebebeb 50%,#dddddd 51%,#cfcfcf 100%);text-align:left;padding-left:5px;line-height:17px;font-size:12px;"><span class="sl">Cepst</span></div>
<div class="a" style="left:1189px;top:389px;width:42px;height:18px;border:1px solid #898c95;border-bottom:0;background:linear-gradient(#f3f3f3 0,#ebebeb 50%,#dddddd 51%,#cfcfcf 100%);text-align:left;padding-left:5px;line-height:17px;font-size:12px;"><span class="sl">THD</span></div>
<div class="a" style="left:1231px;top:389px;width:43px;height:18px;border:1px solid #898c95;border-bottom:0;background:linear-gradient(#f3f3f3 0,#ebebeb 50%,#dddddd 51%,#cfcfcf 100%);text-align:left;padding-left:5px;line-height:17px;font-size:12px;"><span class="sl">Uncert</span></div>
<div class="a" style="left:1061px;top:386px;width:46px;height:21px;border:1px solid #898c95;border-bottom:0;background:#fff;line-height:19px;font-size:12px;padding-left:6px;"><span class="sl">Main</span></div>
<div class="a" style="left:1062px;top:407px;width:213px;height:326px;background:#fbfbfb;"></div>
<div class="gb" style="left:1066px;top:410px;width:112px;height:150px;background:#fbfbfb;"></div>
<div class="cb" style="left:1073px;top:415px;"></div>
<div class="t " style="left:1089px;top:415px;font-size:12px;transform:scaleX(0.8778);">Stay on top</div>
<div class="cb" style="left:1073px;top:431px;"></div>
<div class="t " style="left:1089px;top:431px;font-size:12px;transform:scaleX(0.8625);">Volt meter</div>
<div class="cb" style="left:1073px;top:447px;"></div>
<div class="t " style="left:1089px;top:447px;font-size:12px;transform:scaleX(0.8530);">Freq. meter</div>
<div class="cb" style="left:1073px;top:463px;"></div>
<div class="t " style="left:1089px;top:463px;font-size:12px;transform:scaleX(0.9470);">Wave Gen./Rec</div>
<div class="cb" style="left:1073px;top:480px;"></div>
<div class="t " style="left:1089px;top:480px;font-size:12px;transform:scaleX(0.8727);">Phase</div>
<div class="cb" style="left:1073px;top:495px;"></div>
<div class="t " style="left:1089px;top:495px;font-size:12px;transform:scaleX(0.9170);">THD view</div>
<div class="cb" style="left:1073px;top:511px;"></div>
<div class="t " style="left:1089px;top:511px;font-size:12px;transform:scaleX(0.8996);">THD+Noise view</div>
<div class="cb" style="left:1073px;top:527px;"></div>
<div class="t " style="left:1089px;top:527px;font-size:12px;transform:scaleX(0.8677);">ZRLC meter</div>
<div class="cb" style="left:1073px;top:543px;"></div>
<div class="t " style="left:1089px;top:543px;font-size:12px;transform:scaleX(0.9048);">Fast Rec./Play</div>
<div class="btn" style="left:1186px;top:417px;width:87px;height:14px;line-height:12px;"><span class="s" style="font-size:12px;transform:scaleX(0.8790);">Capture scope</span></div>
<div class="btn" style="left:1186px;top:436px;width:87px;height:14px;line-height:12px;"><span class="s" style="font-size:12px;transform:scaleX(0.8598);">Capture spectrum</span></div>
<div class="btn" style="left:1185px;top:454px;width:57px;height:14px;line-height:12px;"><span class="s">WaveOn</span></div>
<div class="btn" style="left:1247px;top:454px;width:26px;height:14px;line-height:12px;"><span class="s">Info</span></div>
<div class="gb" style="left:1185px;top:475px;width:89px;height:85px;background:#fbfbfb;"></div>
<div class="t " style="left:1202px;top:487px;">wait</div>
<div class="ed" style="left:1233px;top:484px;width:33px;height:20px;"></div>
<div class="t " style="left:1237px;top:487px;">312</div>
<div class="t " style="left:1202px;top:510px;">req.</div>
<div class="ed" style="left:1233px;top:507px;width:33px;height:20px;"></div>
<div class="t " style="left:1237px;top:510px;">-8</div>
<div class="t " style="left:1202px;top:533px;">used</div>
<div class="ed" style="left:1233px;top:530px;width:33px;height:20px;"></div>
<div class="t " style="left:1237px;top:533px;">15</div>
<div class="gb" style="left:1066px;top:567px;width:112px;height:151px;background:#fbfbfb;"></div>
<div class="t" style="left:1073px;top:560px;background:#fbfbfb;padding:0 1px;">Y - axis</div>
<div class="a" style="left:1086px;top:582px;width:8px;height:108px;border:1px solid #cfcfcf;border-left-color:#b9b9b9;background:linear-gradient(90deg,#dcdcdc,#ececec);"></div>
<div class="a" style="left:1078px;top:585px;width:4px;height:1px;background:#c8c8c8;"></div>
<div class="a" style="left:1098px;top:585px;width:4px;height:1px;background:#c8c8c8;"></div>
<div class="a" style="left:1078px;top:606px;width:4px;height:1px;background:#c8c8c8;"></div>
<div class="a" style="left:1098px;top:606px;width:4px;height:1px;background:#c8c8c8;"></div>
<div class="a" style="left:1078px;top:626px;width:4px;height:1px;background:#c8c8c8;"></div>
<div class="a" style="left:1098px;top:626px;width:4px;height:1px;background:#c8c8c8;"></div>
<div class="a" style="left:1078px;top:646px;width:4px;height:1px;background:#c8c8c8;"></div>
<div class="a" style="left:1098px;top:646px;width:4px;height:1px;background:#c8c8c8;"></div>
<div class="a" style="left:1078px;top:667px;width:4px;height:1px;background:#c8c8c8;"></div>
<div class="a" style="left:1098px;top:667px;width:4px;height:1px;background:#c8c8c8;"></div>
<div class="a" style="left:1078px;top:688px;width:4px;height:1px;background:#c8c8c8;"></div>
<div class="a" style="left:1098px;top:688px;width:4px;height:1px;background:#c8c8c8;"></div>
<div class="a" style="left:1083px;top:634px;width:15px;height:7px;border:1px solid #8e8e8e;background:linear-gradient(#fbfbfb,#d8d8d8);border-radius:2px;"></div>
<div class="cb" style="left:1121px;top:574px;"></div>
<div class="t " style="left:1137px;top:574px;">Log</div>
<div class="cb" style="left:1121px;top:593px;"></div>
<div class="t " style="left:1137px;top:593px;">Hold</div>
<div class="cb d" style="left:1121px;top:611px;"><svg width="11" height="11" viewBox="0 0 11 11" style="position:absolute;left:0;top:0"><path d="M2.2 5.2 L4.3 8.2 L8.6 1.8" fill="none" stroke="#b9b9b9" stroke-width="1.7"/></svg></div>
<div class="t g" style="left:1137px;top:611px;">Lines</div>
<div class="cb" style="left:1121px;top:629px;"></div>
<div class="t " style="left:1137px;top:629px;">Info</div>
<div class="t " style="left:1113px;top:644px;">Average</div>
<div class="combo" style="left:1113px;top:657px;width:57px;height:20px;line-height:18px;padding-left:4px;font-size:12px;"><span class="sl">5</span><i></i></div>
<div class="t " style="left:1113px;top:679px;">Step</div>
<div class="combo d" style="left:1113px;top:693px;width:57px;height:20px;line-height:18px;padding-left:4px;font-size:12px;"><span class="sl">6 div</span><i></i></div>
<div class="btn" style="left:1074px;top:699px;width:31px;height:13px;line-height:11px;"><span class="s">Auto</span></div>
<div class="gb" style="left:1185px;top:567px;width:89px;height:98px;background:#fbfbfb;"></div>
<div class="t" style="left:1192px;top:560px;background:#fbfbfb;padding:0 1px;">X - axis</div>
<div class="cb" style="left:1193px;top:577px;"></div>
<div class="t " style="left:1209px;top:577px;">Log</div>
<div class="cb" style="left:1238px;top:577px;"></div>
<div class="t " style="left:1254px;top:577px;">3D</div>
<div class="cb" style="left:1193px;top:594px;"></div>
<div class="t " style="left:1209px;top:594px;">true X</div>
<div class="combo" style="left:1193px;top:610px;width:73px;height:20px;line-height:18px;padding-left:4px;font-size:12px;"><span class="sl">Fit screen</span><i></i></div>
<div class="combo d" style="left:1193px;top:637px;width:73px;height:20px;line-height:18px;padding-left:4px;font-size:12px;"><span class="sl">1/1</span><i></i></div>
<div class="gb" style="left:1185px;top:676px;width:89px;height:41px;background:#fbfbfb;"></div>
<div class="t" style="left:1192px;top:669px;background:#fbfbfb;padding:0 1px;">Channel(s)</div>
<div class="combo" style="left:1193px;top:689px;width:73px;height:20px;line-height:18px;padding-left:4px;font-size:12px;"><span class="sl">A</span><i></i></div>
<div class="a" style="left:0px;top:742px;width:1280px;height:1px;background:#b9b9b9;"></div>
<div class="a" style="left:0px;top:743px;width:1280px;height:17px;background:#f3f3f3;"></div>
<div class="t " style="left:4px;top:746px;font-size:11.5px;font-style:italic;transform:scaleX(0.9348);">[Points = 32768]</div>
<div class="t " style="left:88px;top:746px;font-size:11.5px;font-style:italic;transform:scaleX(0.9340);">[Sampling = 96000Hz]</div>
<div class="t " style="left:201px;top:746px;font-size:11.5px;font-style:italic;transform:scaleX(0.9503);">[Smoothing = Hanning]</div>
<div class="t " style="left:319px;top:746px;font-size:11.5px;font-style:italic;transform:scaleX(0.9297);">[Ini = C:\Program Files\Visual Analyser\VA.ini]</div>
<div class="t " style="left:542px;top:746px;font-size:11.5px;font-style:italic;transform:scaleX(0.8819);">[UID = 4BCEA4329EE3B30A28DE8B5AFC376846]</div>
<div class="a" style="left:0;top:760px;width:1280px;height:40px;overflow:hidden;background:linear-gradient(90deg,#1d4b8b 0,#22579a 60px,#2c6db2 150px,#3487cb 300px,#3a93d3 450px,#3e98d7 620px,#3c94d4 720px,#358bd0 880px,#2f78bc 945px,#21589c 1000px,#1d4d8e 1100px,#1b4684 1280px);"><div style="position:absolute;left:610px;top:-10px;width:90px;height:60px;transform:skewX(-35deg);background:linear-gradient(90deg,rgba(255,255,255,0),rgba(255,255,255,.10) 50%,rgba(255,255,255,0));"></div><div style="position:absolute;left:915px;top:-10px;width:22px;height:60px;transform:skewX(30deg);background:linear-gradient(90deg,rgba(255,255,255,0),rgba(255,255,255,.38) 50%,rgba(255,255,255,0));"></div></div>
<div class="a" style="left:0;top:760px;width:1280px;height:40px;background:linear-gradient(180deg,rgba(255,255,255,.0) 0,rgba(255,255,255,.28) 1px,rgba(255,255,255,.10) 3px,rgba(255,255,255,0) 50%,rgba(0,0,0,.10) 100%);"></div>
<div class="a" style="left:0px;top:760px;width:1280px;height:1px;background:#16355f;"></div>
<svg class="a" style="left:7px;top:760px" width="40" height="40" viewBox="0 0 40 40">
<defs><radialGradient id="orb" cx="50%" cy="35%" r="65%"><stop offset="0" stop-color="#8fd0f5"/><stop offset="0.45" stop-color="#3a8ed2"/><stop offset="0.8" stop-color="#1f5fa8"/><stop offset="1" stop-color="#1a4a86"/></radialGradient>
<radialGradient id="orbg" cx="50%" cy="95%" r="50%"><stop offset="0" stop-color="#7fe3ff" stop-opacity=".9"/><stop offset="1" stop-color="#7fe3ff" stop-opacity="0"/></radialGradient></defs>
<circle cx="20" cy="20" r="18.2" fill="url(#orb)" stroke="#7fb0dc" stroke-width="1" stroke-opacity=".75"/><circle cx="20" cy="20" r="17" fill="none" stroke="#15396b" stroke-width="1.2" stroke-opacity=".55"/>
<circle cx="20" cy="20" r="17" fill="url(#orbg)"/>
<g transform="translate(20 21) scale(1.12) translate(-19 -20)"><path d="M11 12.5 C14 10.5 16.5 10.8 19 12.5 L17.6 19.5 C15 18 12.5 18 9.8 19.8 Z" fill="#e8542a"/>
<path d="M20.5 12.8 C23 14.5 26 14.3 29 12 L27.5 19.2 C25 21 22 21 19.2 19.5 Z" fill="#8cc63e"/>
<path d="M9.5 21.3 C12.3 19.5 14.8 19.6 17.3 21 L15.8 28 C13.3 26.5 10.8 26.6 8 28.5 Z" fill="#3f9de0"/>
<path d="M18.8 21.2 C21.5 22.8 24.5 22.7 27.2 20.8 L25.7 27.8 C23 29.6 20 29.6 17.3 28 Z" fill="#f6c22d"/></g>
<ellipse cx="20" cy="10" rx="13" ry="7" fill="#fff" opacity=".22"/>
</svg>
<svg class="a" style="left:58px;top:764px" width="9" height="32" viewBox="0 0 9 32"><rect x="0" y="0" width="2" height="2" fill="#163a66" opacity=".8"/><rect x="1" y="1" width="1" height="1" fill="#6fa6dc" opacity=".8"/><rect x="3" y="0" width="2" height="2" fill="#163a66" opacity=".8"/><rect x="4" y="1" width="1" height="1" fill="#6fa6dc" opacity=".8"/><rect x="6" y="0" width="2" height="2" fill="#163a66" opacity=".8"/><rect x="7" y="1" width="1" height="1" fill="#6fa6dc" opacity=".8"/><rect x="0" y="4" width="2" height="2" fill="#163a66" opacity=".8"/><rect x="1" y="5" width="1" height="1" fill="#6fa6dc" opacity=".8"/><rect x="3" y="4" width="2" height="2" fill="#163a66" opacity=".8"/><rect x="4" y="5" width="1" height="1" fill="#6fa6dc" opacity=".8"/><rect x="6" y="4" width="2" height="2" fill="#163a66" opacity=".8"/><rect x="7" y="5" width="1" height="1" fill="#6fa6dc" opacity=".8"/><rect x="0" y="8" width="2" height="2" fill="#163a66" opacity=".8"/><rect x="1" y="9" width="1" height="1" fill="#6fa6dc" opacity=".8"/><rect x="3" y="8" width="2" height="2" fill="#163a66" opacity=".8"/><rect x="4" y="9" width="1" height="1" fill="#6fa6dc" opacity=".8"/><rect x="6" y="8" width="2" height="2" fill="#163a66" opacity=".8"/><rect x="7" y="9" width="1" height="1" fill="#6fa6dc" opacity=".8"/><rect x="0" y="12" width="2" height="2" fill="#163a66" opacity=".8"/><rect x="1" y="13" width="1" height="1" fill="#6fa6dc" opacity=".8"/><rect x="3" y="12" width="2" height="2" fill="#163a66" opacity=".8"/><rect x="4" y="13" width="1" height="1" fill="#6fa6dc" opacity=".8"/><rect x="6" y="12" width="2" height="2" fill="#163a66" opacity=".8"/><rect x="7" y="13" width="1" height="1" fill="#6fa6dc" opacity=".8"/><rect x="0" y="16" width="2" height="2" fill="#163a66" opacity=".8"/><rect x="1" y="17" width="1" height="1" fill="#6fa6dc" opacity=".8"/><rect x="3" y="16" width="2" height="2" fill="#163a66" opacity=".8"/><rect x="4" y="17" width="1" height="1" fill="#6fa6dc" opacity=".8"/><rect x="6" y="16" width="2" height="2" fill="#163a66" opacity=".8"/><rect x="7" y="17" width="1" height="1" fill="#6fa6dc" opacity=".8"/><rect x="0" y="20" width="2" height="2" fill="#163a66" opacity=".8"/><rect x="1" y="21" width="1" height="1" fill="#6fa6dc" opacity=".8"/><rect x="3" y="20" width="2" height="2" fill="#163a66" opacity=".8"/><rect x="4" y="21" width="1" height="1" fill="#6fa6dc" opacity=".8"/><rect x="6" y="20" width="2" height="2" fill="#163a66" opacity=".8"/><rect x="7" y="21" width="1" height="1" fill="#6fa6dc" opacity=".8"/><rect x="0" y="24" width="2" height="2" fill="#163a66" opacity=".8"/><rect x="1" y="25" width="1" height="1" fill="#6fa6dc" opacity=".8"/><rect x="3" y="24" width="2" height="2" fill="#163a66" opacity=".8"/><rect x="4" y="25" width="1" height="1" fill="#6fa6dc" opacity=".8"/><rect x="6" y="24" width="2" height="2" fill="#163a66" opacity=".8"/><rect x="7" y="25" width="1" height="1" fill="#6fa6dc" opacity=".8"/><rect x="0" y="28" width="2" height="2" fill="#163a66" opacity=".8"/><rect x="1" y="29" width="1" height="1" fill="#6fa6dc" opacity=".8"/><rect x="3" y="28" width="2" height="2" fill="#163a66" opacity=".8"/><rect x="4" y="29" width="1" height="1" fill="#6fa6dc" opacity=".8"/><rect x="6" y="28" width="2" height="2" fill="#163a66" opacity=".8"/><rect x="7" y="29" width="1" height="1" fill="#6fa6dc" opacity=".8"/></svg>
<svg class="a" style="left:1007px;top:764px" width="9" height="32" viewBox="0 0 9 32"><rect x="0" y="0" width="2" height="2" fill="#163a66" opacity=".8"/><rect x="1" y="1" width="1" height="1" fill="#6fa6dc" opacity=".8"/><rect x="3" y="0" width="2" height="2" fill="#163a66" opacity=".8"/><rect x="4" y="1" width="1" height="1" fill="#6fa6dc" opacity=".8"/><rect x="6" y="0" width="2" height="2" fill="#163a66" opacity=".8"/><rect x="7" y="1" width="1" height="1" fill="#6fa6dc" opacity=".8"/><rect x="0" y="4" width="2" height="2" fill="#163a66" opacity=".8"/><rect x="1" y="5" width="1" height="1" fill="#6fa6dc" opacity=".8"/><rect x="3" y="4" width="2" height="2" fill="#163a66" opacity=".8"/><rect x="4" y="5" width="1" height="1" fill="#6fa6dc" opacity=".8"/><rect x="6" y="4" width="2" height="2" fill="#163a66" opacity=".8"/><rect x="7" y="5" width="1" height="1" fill="#6fa6dc" opacity=".8"/><rect x="0" y="8" width="2" height="2" fill="#163a66" opacity=".8"/><rect x="1" y="9" width="1" height="1" fill="#6fa6dc" opacity=".8"/><rect x="3" y="8" width="2" height="2" fill="#163a66" opacity=".8"/><rect x="4" y="9" width="1" height="1" fill="#6fa6dc" opacity=".8"/><rect x="6" y="8" width="2" height="2" fill="#163a66" opacity=".8"/><rect x="7" y="9" width="1" height="1" fill="#6fa6dc" opacity=".8"/><rect x="0" y="12" width="2" height="2" fill="#163a66" opacity=".8"/><rect x="1" y="13" width="1" height="1" fill="#6fa6dc" opacity=".8"/><rect x="3" y="12" width="2" height="2" fill="#163a66" opacity=".8"/><rect x="4" y="13" width="1" height="1" fill="#6fa6dc" opacity=".8"/><rect x="6" y="12" width="2" height="2" fill="#163a66" opacity=".8"/><rect x="7" y="13" width="1" height="1" fill="#6fa6dc" opacity=".8"/><rect x="0" y="16" width="2" height="2" fill="#163a66" opacity=".8"/><rect x="1" y="17" width="1" height="1" fill="#6fa6dc" opacity=".8"/><rect x="3" y="16" width="2" height="2" fill="#163a66" opacity=".8"/><rect x="4" y="17" width="1" height="1" fill="#6fa6dc" opacity=".8"/><rect x="6" y="16" width="2" height="2" fill="#163a66" opacity=".8"/><rect x="7" y="17" width="1" height="1" fill="#6fa6dc" opacity=".8"/><rect x="0" y="20" width="2" height="2" fill="#163a66" opacity=".8"/><rect x="1" y="21" width="1" height="1" fill="#6fa6dc" opacity=".8"/><rect x="3" y="20" width="2" height="2" fill="#163a66" opacity=".8"/><rect x="4" y="21" width="1" height="1" fill="#6fa6dc" opacity=".8"/><rect x="6" y="20" width="2" height="2" fill="#163a66" opacity=".8"/><rect x="7" y="21" width="1" height="1" fill="#6fa6dc" opacity=".8"/><rect x="0" y="24" width="2" height="2" fill="#163a66" opacity=".8"/><rect x="1" y="25" width="1" height="1" fill="#6fa6dc" opacity=".8"/><rect x="3" y="24" width="2" height="2" fill="#163a66" opacity=".8"/><rect x="4" y="25" width="1" height="1" fill="#6fa6dc" opacity=".8"/><rect x="6" y="24" width="2" height="2" fill="#163a66" opacity=".8"/><rect x="7" y="25" width="1" height="1" fill="#6fa6dc" opacity=".8"/><rect x="0" y="28" width="2" height="2" fill="#163a66" opacity=".8"/><rect x="1" y="29" width="1" height="1" fill="#6fa6dc" opacity=".8"/><rect x="3" y="28" width="2" height="2" fill="#163a66" opacity=".8"/><rect x="4" y="29" width="1" height="1" fill="#6fa6dc" opacity=".8"/><rect x="6" y="28" width="2" height="2" fill="#163a66" opacity=".8"/><rect x="7" y="29" width="1" height="1" fill="#6fa6dc" opacity=".8"/></svg>
<svg class="a" style="left:88px;top:762px" width="34" height="36" viewBox="0 0 34 36">
<defs><linearGradient id="ieb" x1="0" y1="0" x2="0" y2="1"><stop offset="0" stop-color="#6fd0f8"/><stop offset="1" stop-color="#1e8fd8"/></linearGradient></defs>
<path d="M17 9 C10.5 9 6 13.8 6 20 C6 26.2 10.6 31 17.2 31 C22 31 25.8 28.4 27.5 24.2 L21.3 24.2 C20.5 25.6 19 26.4 17.2 26.4 C14.3 26.4 12.3 24.5 11.9 21.7 L28 21.7 C28.1 21.1 28.1 20.5 28.1 20 C28.1 13.8 23.6 9 17 9 Z M12 17.6 C12.6 15.2 14.5 13.6 17 13.6 C19.6 13.6 21.5 15.2 22 17.6 Z" fill="url(#ieb)" stroke="#2a8fd0" stroke-width=".5"/>
<path d="M4 33 C0 27 6 14 17 7 C24 2.5 30.5 2 31 6 C31.3 8 30 10.5 28.5 12.5 C29.5 9.5 29 7 26 7 C21 7 12 13.5 7.5 21.5 C4.5 27 4.5 31 7 32 C5.8 33.3 4.8 33.6 4 33 Z" fill="#f2c21a" stroke="#d9a40e" stroke-width=".5"/>
</svg>
<svg class="a" style="left:149px;top:766px" width="36" height="32" viewBox="0 0 36 32">
<path d="M3 4 h10 l2 3 h17 v20 h-29 z" fill="#f3d57c" stroke="#d8b24a" stroke-width=".8"/>
<rect x="5" y="2" width="3" height="2.5" fill="#3aa655"/><rect x="15" y="4" width="3" height="2.5" fill="#d0532d"/><rect x="23" y="6" width="3" height="2.5" fill="#3b86c8"/>
<path d="M2 10 h32 v18 h-32 z" fill="#f7e29e" stroke="#dcbb55" stroke-width=".8"/>
<path d="M8 16 h20 v13 h-20 z" fill="#9fc3e6" opacity=".9"/><path d="M8 16 h20 v3 h-20 z" fill="#c9def2"/>
<path d="M12 22 h12 v7 h-12 z" fill="#f0c85a"/>
<path d="M8 25 h6 v4 h-6 z M22 25 h6 v4 h-6 z" fill="#7fb0de"/>
</svg>
<svg class="a" style="left:214px;top:767px" width="30" height="28" viewBox="0 0 30 28">
<rect x="8" y="1" width="20" height="22" fill="#b9d6ee" stroke="#8fb8dc" stroke-width=".8"/>
<rect x="4" y="3" width="20" height="22" fill="#a8cbe8" stroke="#86b2d8" stroke-width=".8"/>
<circle cx="12" cy="13" r="9.5" fill="#f08a1d" stroke="#d96d0a" stroke-width=".8"/>
<circle cx="12" cy="12" r="8" fill="#f7a23c" opacity=".7"/>
<path d="M9 7.5 L17.5 13 L9 18.5 Z" fill="#fff"/>
</svg>
<svg class="a" style="left:275px;top:764px" width="32" height="32" viewBox="-16 -16 32 32">
<circle r="15" fill="#fbbc05"/>
<path d="M0.00 15.00 A15 15 0 0 1 -12.99 -7.50 L-5.79 3.76 A6.9 6.9 0 0 0 6.15 3.13 Z" fill="#34a853" stroke="#34a853" stroke-width=".4"/>
<path d="M12.99 -7.50 A15 15 0 0 1 0.00 15.00 L6.15 3.13 A6.9 6.9 0 0 0 -0.36 -6.89 Z" fill="#fbbc05" stroke="#fbbc05" stroke-width=".4"/>
<path d="M-12.99 -7.50 A15 15 0 0 1 12.99 -7.50 L-0.36 -6.89 A6.9 6.9 0 0 0 -5.79 3.76 Z" fill="#ea4335" stroke="#ea4335" stroke-width=".4"/>
<circle r="6.9" fill="#fff"/><circle r="5.4" fill="#4285f4"/>
</svg>
<div class="a" style="left:324px;top:761px;width:59px;height:39px;border:1px solid #1d4a80;border-radius:3px;background:linear-gradient(#a5cdee 0,#8bbde6 45%,#6aa8dc 50%,#7ab6e4 100%);box-shadow:inset 0 0 0 1px rgba(255,255,255,.55);"></div>
<svg class="a" style="left:337px;top:764px" width="32" height="32" viewBox="0 0 32 32" shape-rendering="crispEdges">
<rect width="32" height="32" fill="#18e24a"/>
<g stroke="#0e9a32" stroke-width="1"><path d="M4 0v20M9 0v20M14 0v20M19 0v20M24 0v20M29 0v20M0 4h32M0 9h32M0 14h32"/></g>
<path d="M1 19 h4 l2 -3 l2 -8 l2 -4 h8 l2 4 l2 8 l3 3 h4" fill="none" stroke="#f4f41a" stroke-width="1.5" shape-rendering="auto"/>
<path d="M2 23 h12 v-2 h5 v2 h12 M2 27 h7 v3 h22 M9 27 h8 v-2 h14" fill="none" stroke="#c01818" stroke-width="1.3"/>
<path d="M6 2v6M17 12v8" stroke="#0a4a8a" stroke-width="1" stroke-dasharray="1 1"/>
<circle cx="28" cy="4" r="3.5" fill="#d22" shape-rendering="auto"/><path d="M26.5 5.5 L29.5 2.5" stroke="#fff" stroke-width="1.4" shape-rendering="auto"/>
</svg>
<div class="t" style="left:1025px;top:771px;font-size:12px;line-height:14px;height:14px;color:#fff;transform:scaleX(.92);">SK</div>
<div class="a" style="left:1055px;top:778px;border:4px solid transparent;border-bottom:5px solid #fff;border-top:0;"></div>
<svg class="a" style="left:1076px;top:773px" width="15" height="16" viewBox="0 0 15 16">
<rect x="1" y="3" width="8" height="12" rx="1" fill="none" stroke="#fff" stroke-width="1.5"/><rect x="3.5" y="1" width="3" height="2" fill="#fff"/>
<path d="M6 4 h6 v4 c0 2 -1.5 3 -3 3 v3 h-1 v-3 c-1.5 0 -3 -1 -3 -3 z" fill="#fff" stroke="#24467a" stroke-width=".6"/><path d="M7.5 1.5v3M10.5 1.5v3" stroke="#fff" stroke-width="1.2"/>
</svg>
<svg class="a" style="left:1100px;top:774px" width="15" height="15" viewBox="0 0 15 15">
<path d="M1 5 h3 l4 -4 v13 l-4 -4 h-3 z" fill="#fff" stroke="#d8e4f0" stroke-width=".5"/>
<path d="M10 4.5 q2 3 0 6 M12 2.5 q3 5 0 10" fill="none" stroke="#fff" stroke-width="1.2"/>
</svg>
<svg class="a" style="left:1123px;top:774px" width="17" height="15" viewBox="0 0 17 15">
<rect x="1" y="11" width="2" height="3" fill="#b8bcc4"/><rect x="4" y="9" width="2" height="5" fill="#b8bcc4"/><rect x="7" y="6" width="2" height="8" fill="#b8bcc4"/><rect x="10" y="3" width="2" height="11" fill="#b8bcc4"/><rect x="13" y="0" width="2" height="14" fill="#b8bcc4"/>
<path d="M9 7 l6 6 M15 7 l-6 6" stroke="#e02020" stroke-width="1.8"/>
</svg>
<svg class="a" style="left:1148px;top:772px" width="16" height="18" viewBox="0 0 16 18">
<path d="M2 6 l3 -3 l3 2 l3 -4 l3 4 l-1 5 l2 6 h-14 l2 -6 z" fill="#f08a1d"/>
<rect x="5.5" y="5" width="5" height="5" fill="#fdf0d8" stroke="#c8541a" stroke-width=".8"/>
<path d="M8 10 l3.5 6 h-7 z" fill="#f6d21e"/><rect x="7.5" y="12" width="1" height="2.5" fill="#333"/>
</svg>
<svg class="a" style="left:1172px;top:773px" width="16" height="17" viewBox="0 0 16 17">
<path d="M2 1 v15" stroke="#fff" stroke-width="1.6"/>
<path d="M3.5 2 c3 -1.5 5 1.5 10.5 0.5 l-2.5 3.5 l2.5 3.5 c-5.5 1 -7.5 -2 -10.5 -0.5 z" fill="#fff"/>
</svg>
<div class="t" style="left:1197px;top:766px;width:66px;text-align:center;font-size:12px;line-height:14px;height:14px;color:#fff;transform-origin:50% 50%;transform:scaleX(.9);">1:18</div>
<div class="t" style="left:1197px;top:783px;width:66px;text-align:center;font-size:12px;line-height:14px;height:14px;color:#fff;transform-origin:50% 50%;transform:scaleX(.88);">20. 1. 2019</div>
<div class="a" style="left:1266px;top:761px;width:14px;height:39px;border-left:1px solid #162f54;background:linear-gradient(135deg,rgba(255,255,255,.28) 0,rgba(255,255,255,.10) 45%,rgba(255,255,255,.02) 50%,rgba(255,255,255,.10) 100%);box-shadow:inset 1px 0 0 rgba(255,255,255,.3);"></div>
</body></html>
